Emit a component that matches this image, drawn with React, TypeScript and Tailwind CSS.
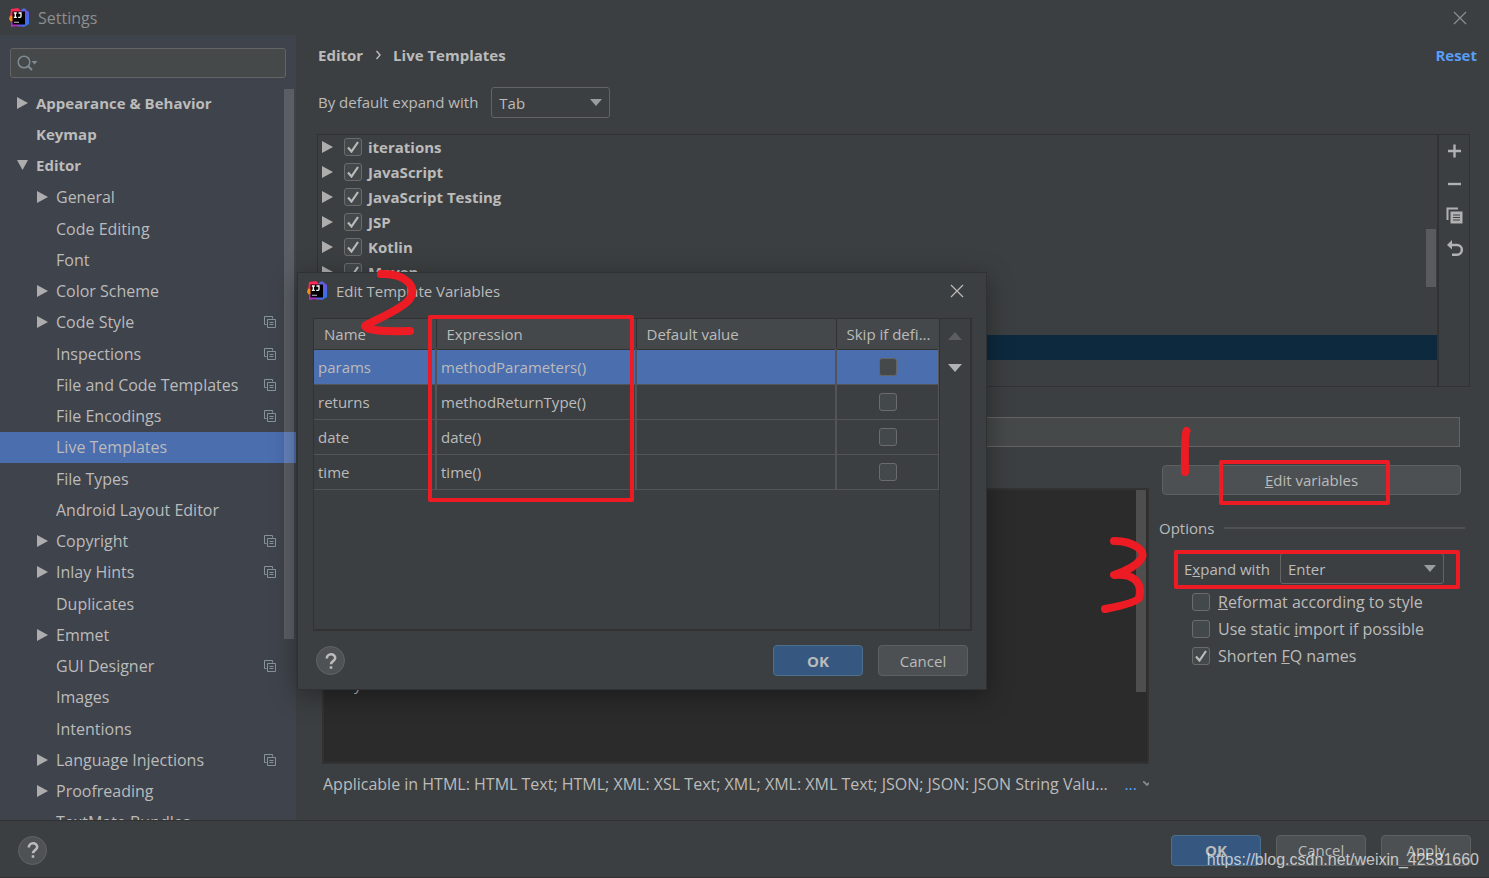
import { useId, type ReactNode } from "react";

type TreeItem = {
  label: string;
  level: 0 | 1;
  arrow?: "right" | "down";
  scoped?: boolean;
  selected?: boolean;
};

const tree: TreeItem[] = [
  { label: "Appearance & Behavior", level: 0, arrow: "right" },
  { label: "Keymap", level: 0 },
  { label: "Editor", level: 0, arrow: "down" },
  { label: "General", level: 1, arrow: "right" },
  { label: "Code Editing", level: 1 },
  { label: "Font", level: 1 },
  { label: "Color Scheme", level: 1, arrow: "right" },
  { label: "Code Style", level: 1, arrow: "right", scoped: true },
  { label: "Inspections", level: 1, scoped: true },
  { label: "File and Code Templates", level: 1, scoped: true },
  { label: "File Encodings", level: 1, scoped: true },
  { label: "Live Templates", level: 1, selected: true },
  { label: "File Types", level: 1 },
  { label: "Android Layout Editor", level: 1 },
  { label: "Copyright", level: 1, arrow: "right", scoped: true },
  { label: "Inlay Hints", level: 1, arrow: "right", scoped: true },
  { label: "Duplicates", level: 1 },
  { label: "Emmet", level: 1, arrow: "right" },
  { label: "GUI Designer", level: 1, scoped: true },
  { label: "Images", level: 1 },
  { label: "Intentions", level: 1 },
  { label: "Language Injections", level: 1, arrow: "right", scoped: true },
  { label: "Proofreading", level: 1, arrow: "right" },
  { label: "TextMate Bundles", level: 1 },
];

const groups = ["iterations", "JavaScript", "JavaScript Testing", "JSP", "Kotlin", "Maven"];

const variables = [
  { name: "params", expression: "methodParameters()" },
  { name: "returns", expression: "methodReturnType()" },
  { name: "date", expression: "date()" },
  { name: "time", expression: "time()" },
];

function AppLogo() {
  const id = useId();
  return (
    <svg viewBox="0 0 20 20" className="size-5 shrink-0" aria-hidden="true">
      <defs>
        <linearGradient id={id} x1="0" y1="0" x2="1" y2="1">
          <stop offset="0" stopColor="#3f78f0" />
          <stop offset="0.5" stopColor="#6a55dd" />
          <stop offset="1" stopColor="#1f7df5" />
        </linearGradient>
      </defs>
      <path d="M2 1 9 0l5 5-5 6H1z" fill="#fe2857" />
      <path d="M0 11 1 7.500l5 1.500v6l-4-1z" fill="#fc8a1d" />
      <path d="M2 13h6l3 6-4-1-5 1z" fill="#b52fc4" />
      <path d="m12 2 3-2 5 4v12l-5 3-6-1 1-9z" fill={`url(#${id})`} />
      <path d="M3.500 3.500h12.500v13H3.500z" fill="#000" />
      <path d="M4.800 5h3M6.300 5v4M4.800 9.300h3M9.500 5h2.500v3.300q0 1-1 1H9.200" stroke="#fff" strokeWidth="1.300" fill="none" />
      <path d="M5 14.300h5" stroke="#aaa" strokeWidth="1.200" />
    </svg>
  );
}

function Arrow({ dir }: { dir: "right" | "down" }) {
  return (
    <svg viewBox="0 0 12 12" className="size-3 shrink-0" aria-hidden="true">
      <path d={dir === "right" ? "M1 0l11 6-11 6z" : "M1 1h11L6.500 11z"} fill="#adadad" />
    </svg>
  );
}

function ScopeIcon() {
  return (
    <svg viewBox="0 0 12 12" className="size-3 shrink-0" fill="none" stroke="#87939a" aria-hidden="true">
      <path d="M2.500 8.500h-2v-8h8v2M3.500 3.500h8v8h-8zM5.500 6.500h4M5.500 8.500h4" />
    </svg>
  );
}

function CloseIcon() {
  return (
    <svg viewBox="0 0 14 14" className="size-[14px]" fill="none" stroke="currentColor" strokeWidth="1.200" aria-hidden="true">
      <path d="M1 1l12 12M13 1L1 13" />
    </svg>
  );
}

function Check({ label, checked = false, disabled = false }: { label: string; checked?: boolean; disabled?: boolean }) {
  return (
    <span className="relative grid size-[18px] shrink-0 place-items-center">
      <input
        type="checkbox"
        id={label}
        aria-label={label}
        defaultChecked={checked}
        className={`peer col-start-1 row-start-1 size-[18px] appearance-none rounded-[3px] border ${
          disabled ? "border-[#646464] bg-[#45494a]" : "border-[#6b6b6b] bg-[#43494a]"
        }`}
      />
      <svg
        viewBox="0 0 12 12"
        className="pointer-events-none invisible col-start-1 row-start-1 size-3 peer-checked:visible"
        fill="none"
        stroke="#bbbbbb"
        strokeWidth="2.200"
        aria-hidden="true"
      >
        <path d="M1 6.500l3.500 4L11 1" />
      </svg>
    </span>
  );
}

function Dropdown({ id, value, className }: { id: string; value: string; className: string }) {
  return (
    <span className={`relative block ${className}`}>
      <select
        id={id}
        defaultValue={value}
        className="h-[31px] w-full appearance-none rounded-[3px] border border-[#646464] bg-[#3c3f41] pl-[7px] text-[#bbbbbb]"
      >
        <option>{value}</option>
      </select>
      <svg viewBox="0 0 12 7" className="pointer-events-none absolute top-3 right-2 h-[7px] w-3" aria-hidden="true">
        <path d="M0 0h12L6 7z" fill="#9a9da0" />
      </svg>
    </span>
  );
}

function Button({ children, primary = false }: { children: ReactNode; primary?: boolean }) {
  return (
    <button
      className={`h-[31px] w-[90px] rounded-[4px] border ${
        primary ? "border-[#4c708c] bg-[#365880] font-bold" : "border-[#5e6060] bg-[#4c5052]"
      }`}
    >
      {children}
    </button>
  );
}

function HelpButton() {
  return (
    <button
      aria-label="Help"
      className="grid size-[29px] place-items-center rounded-full border border-[#616467] bg-[#4e5254]"
    >
      <svg viewBox="0 0 12 16" className="h-4 w-3" fill="none" stroke="#bbbbbb" strokeWidth="2.600" aria-hidden="true">
        <path d="M1.800 5.500C1.800 0 10.200 0 10.200 5c0 3-4.200 3.200-4.200 6.200M6 13.200v2.600" />
      </svg>
    </button>
  );
}

function Sidebar() {
  return (
    <aside className="relative flex w-[296px] shrink-0 flex-col overflow-hidden bg-[#3f434b]">
      <div className="shrink-0 px-[10px] pt-[13px] pb-[10px]">
        <div className="relative flex items-center">
          <input
            type="text"
            aria-label="Search settings"
            className="h-[30px] w-full rounded-[3px] border border-[#646464] bg-[#45494a] pl-8"
          />
          <svg viewBox="0 0 22 16" className="pointer-events-none absolute left-[7px] h-4 w-[22px]" fill="none" stroke="#7f8b91" strokeWidth="1.500" aria-hidden="true">
            <circle cx="7" cy="7" r="5.800" />
            <path d="M11 11l4 4" strokeWidth="2" />
            <path d="M14.500 6h6L17.500 9.500z" fill="#7f8b91" stroke="none" />
          </svg>
        </div>
      </div>
      <ul className="grid h-[750px] shrink-0 auto-rows-fr">
        {tree.map((item) => (
          <li
            key={item.label}
            className={`flex items-center gap-2 pr-5 whitespace-nowrap ${
              item.level ? "pl-9 text-base" : "pb-[2px] pl-4 font-bold"
            } ${item.selected ? "bg-[#4b6eaf]" : ""}`}
          >
            {item.arrow ? <Arrow dir={item.arrow} /> : <span className="size-3 shrink-0" />}
            <span className="flex-1 leading-5">{item.label}</span>
            {item.scoped && <ScopeIcon />}
          </li>
        ))}
      </ul>
      <div className="absolute top-[54px] right-[2px] h-[550px] w-[10px] bg-white/15" />
    </aside>
  );
}

function TemplateGroups() {
  return (
    <section className="mr-[19px] flex h-[253px] shrink-0 border border-[#323232]">
      <div className="relative flex-1 overflow-hidden">
        <ul>
          {groups.map((name) => (
            <li key={name} className="flex h-[25px] items-center pb-[2px] pl-[3px] font-bold">
              <Arrow dir="right" />
              <span className="ml-[11px]">
                <Check label={name} checked />
              </span>
              <label htmlFor={name} className="ml-[6px]">
                {name}
              </label>
            </li>
          ))}
          <li className="h-[50px]" />
          <li className="h-[25px] bg-[#0d293e]" />
        </ul>
        <div className="absolute top-[94px] right-px h-[58px] w-[10px] bg-[#595b5d]" />
      </div>
      <div className="flex w-8 flex-col items-center gap-[15px] border-l-2 border-[#323232] pt-2 text-[#afb1b3]">
        <button aria-label="Add" className="size-[17px]">
          <svg viewBox="0 0 17 17" fill="none" stroke="currentColor" strokeWidth="2.400"><path d="M2 8h13M8.500 1.500v13" /></svg>
        </button>
        <button aria-label="Remove" className="size-[17px]">
          <svg viewBox="0 0 17 17" fill="none" stroke="currentColor" strokeWidth="2.400"><path d="M2 9h13" /></svg>
        </button>
        <button aria-label="Duplicate" className="size-[17px]">
          <svg viewBox="0 0 17 17" fill="none" stroke="currentColor" strokeWidth="2"><path d="M1.500 13V1.500H12" /><path d="M4.500 4.500h12v12h-12z" fill="currentColor" stroke="none" /><path d="M7 8h7M7 10.500h7M7 13h7" stroke="#3c3f41" strokeWidth="1" /></svg>
        </button>
        <button aria-label="Restore" className="size-[17px]">
          <svg viewBox="0 0 17 17" fill="none" stroke="currentColor" strokeWidth="2.400"><path d="M4 6h7a4.800 4.800 0 0 1 0 9.700H6" /><path d="M1 6L6 1v9.500z" fill="currentColor" stroke="none" /></svg>
        </button>
      </div>
    </section>
  );
}

function Options() {
  return (
    <section className="relative ml-[10px] w-[306px] shrink-0">
      <div className="pt-[18px] pr-1 pl-[3px]">
        <button className="h-[30px] w-full rounded-[4px] border border-[#5e6060] bg-[#4c5052]">
          <u>E</u>dit variables
        </button>
      </div>
      <div className="mt-[21px] flex items-center gap-[10px]">
        <h2 className="leading-6">Options</h2>
        <hr className="flex-1 border-t-2 border-[#515151]" />
      </div>
      <div className="mt-[13px] flex items-center gap-[10px] pl-[25px]">
        <label htmlFor="expand" className="whitespace-nowrap">
          E<u>x</u>pand with
        </label>
        <Dropdown id="expand" value="Enter" className="w-[164px]" />
      </div>
      <div className="mt-[6px] flex flex-col gap-[3px] pl-[33px] text-base">
        <label htmlFor="reformat" className="flex h-6 items-center gap-2 whitespace-nowrap">
          <Check label="reformat" />
          <span><u>R</u>eformat according to style</span>
        </label>
        <label htmlFor="static" className="flex h-6 items-center gap-2 whitespace-nowrap">
          <Check label="static" />
          <span>Use static <u>i</u>mport if possible</span>
        </label>
        <label htmlFor="shorten" className="flex h-6 items-center gap-2 whitespace-nowrap">
          <Check label="shorten" checked />
          <span>Shorten <u>F</u>Q names</span>
        </label>
      </div>
      <svg
        viewBox="0 0 370 200"
        className="pointer-events-none absolute top-[-27px] left-[-69px] h-[200px] w-[370px]"
        fill="none"
        stroke="#ed1c24"
        aria-hidden="true"
      >
        <path d="M96.500 11q-2 3-1.500 41" strokeWidth="8" strokeLinecap="round" />
        <path d="M131 42h167v41H131z" strokeWidth="4" strokeLinejoin="round" />
        <path d="M86 132h282v35H86z" strokeWidth="4" strokeLinejoin="round" />
        <path d="M24 121C45 121 57 132 51 139Q45 148 24 155C44 153 53 163 49 178Q46 183 15 189" strokeWidth="8" strokeLinecap="round" strokeLinejoin="round" />
      </svg>
    </section>
  );
}

function VariablesDialog() {
  return (
    <div
      role="dialog"
      aria-label="Edit Template Variables"
      className="absolute top-[272px] left-[297px] flex h-[418px] w-[690px] flex-col border border-[#2f3133] bg-[#3c3f41] pr-[14px] pl-[15px] shadow-[0_6px_24px_rgba(0,0,0,0.35)]"
    >
      <header className="flex h-[45px] shrink-0 items-center pb-[9px]">
        <span className="-ml-[6px] flex flex-1 items-center gap-[9px]">
          <AppLogo />
          <h2>Edit Template Variables</h2>
        </span>
        <button aria-label="Close dialog" className="mr-2">
          <CloseIcon />
        </button>
      </header>
      <div className="flex h-[313px] shrink-0 border border-r-2 border-b-2 border-[#323232]">
        <div className="flex-1">
          <table className="w-full table-fixed border-collapse text-left">
            <colgroup>
              <col className="w-[122px]" />
              <col className="w-[200px]" />
              <col className="w-[200px]" />
              <col />
            </colgroup>
            <thead>
              <tr className="h-[30px] border-b border-[#323232] bg-[#45484a]">
                {["Name", "Expression", "Default value", "Skip if defi..."].map((head, i) => (
                  <th
                    key={head}
                    className={`pt-px pl-[10px] font-normal whitespace-nowrap ${i < 3 ? "border-r border-[#323232]" : ""}`}
                  >
                    {head}
                  </th>
                ))}
              </tr>
            </thead>
            <tbody>
              {variables.map((v, i) => (
                <tr key={v.name} className={`h-[35px] border-b border-[#525456] ${i === 0 ? "bg-[#4b6eaf]" : ""}`}>
                  <td className="border-r-2 border-[#525456] pl-1">{v.name}</td>
                  <td className="border-r-2 border-[#525456] pl-1">{v.expression}</td>
                  <td className="border-r-2 border-[#525456]" />
                  <td className="border-r border-[#525456]">
                    <span className="flex justify-center">
                      <Check label={`Skip ${v.name}`} disabled={i === 0} />
                    </span>
                  </td>
                </tr>
              ))}
            </tbody>
          </table>
        </div>
        <div className="flex w-[31px] flex-col items-center gap-6 border-l border-[#323232] pt-[13px]">
          <button aria-label="Move up">
            <svg viewBox="0 0 14 8" className="h-2 w-[14px]"><path d="M0 8h14L7 0z" fill="#5b5d5f" /></svg>
          </button>
          <button aria-label="Move down">
            <svg viewBox="0 0 14 8" className="h-2 w-[14px]"><path d="M0 0h14L7 8z" fill="#afb1b3" /></svg>
          </button>
        </div>
      </div>
      <footer className="flex items-center gap-[15px] pt-[14px] pr-1 pl-[3px]">
        <span className="flex-1">
          <HelpButton />
        </span>
        <Button primary>OK</Button>
        <Button>Cancel</Button>
      </footer>
      <svg
        viewBox="0 0 280 236"
        className="pointer-events-none absolute top-[-5px] left-[60px] h-[236px] w-[280px]"
        fill="none"
        stroke="#ed1c24"
        aria-hidden="true"
      >
        <path d="M23 6C48 5 62 20 50 33C39 44 12 54 7 58Q8 64 52 63" strokeWidth="8" strokeLinecap="round" strokeLinejoin="round" />
        <path d="M72 49h202v183H72z" strokeWidth="4" strokeLinejoin="round" />
      </svg>
    </div>
  );
}

export default function App() {
  return (
    <div className="relative flex h-screen flex-col overflow-hidden bg-[#3c3f41] font-['Open_Sans','Noto_Sans',sans-serif] text-[15px] leading-5 text-[#bbbbbb]">
      <header className="flex h-[35px] shrink-0 items-center gap-[9px] pr-[22px] pl-[9px] text-[#8c8e8f]">
        <AppLogo />
        <h1 className="flex-1 text-base">Settings</h1>
        <button aria-label="Close settings">
          <CloseIcon />
        </button>
      </header>

      <div className="flex min-h-0 flex-1">
        <Sidebar />
        <main className="flex min-w-0 flex-1 flex-col pl-[21px]">
          <div className="mt-[10px] flex items-center pr-3 pl-px font-bold">
            <span>Editor</span>
            <svg viewBox="0 0 6 10" className="mx-3 h-[10px] w-[6px]" fill="none" stroke="#bbbbbb" strokeWidth="1.400" aria-hidden="true">
              <path d="M1.500 1L5 5 1.500 9" />
            </svg>
            <span className="flex-1">Live Templates</span>
            <a href="#reset" className="text-[#589df6]">Reset</a>
          </div>
          <div className="mt-[22px] mb-4 flex items-center gap-[13px] pl-px">
            <label htmlFor="default-expand" className="pb-[2px]">By default expand with</label>
            <Dropdown id="default-expand" value="Tab" className="w-[119px]" />
          </div>
          <TemplateGroups />
          <input
            type="text"
            aria-label="Description"
            className="mt-[30px] mr-[29px] ml-[5px] h-[30px] shrink-0 border border-[#646464] bg-[#45494a]"
          />
          <div className="mr-6 ml-[5px] flex">
            <div className="min-w-0 flex-1">
              <div className="relative mt-[41px] flex h-[276px] items-end border-2 border-[#323232] bg-[#2b2b2b] px-[10px] pb-[68px] text-[#a9b7c6]">
                way
                <div className="absolute top-0 right-px h-[202px] w-[10px] bg-[#4e4e4e]" />
              </div>
              <div className="mt-[10px] flex items-center pl-px text-base leading-5">
                <span className="truncate">
                  Applicable in HTML: HTML Text; HTML; XML: XSL Text; XML; XML: XML Text; JSON; JSON: JSON String Valu...
                </span>
                <a href="#contexts" className="ml-auto text-[#589df6]">...</a>
                <svg viewBox="0 0 6 6" className="ml-[6px] size-[6px] shrink-0" fill="none" stroke="#87898b" strokeWidth="1.800" aria-hidden="true">
                  <path d="M0 0l4 4 2-2" />
                </svg>
              </div>
            </div>
            <Options />
          </div>
        </main>
      </div>

      <footer className="relative flex h-[58px] shrink-0 items-center gap-[15px] border-t border-b border-[#323232] px-[18px] pt-[2px]">
        <span className="flex-1">
          <HelpButton />
        </span>
        <Button primary>OK</Button>
        <Button>Cancel</Button>
        <Button>Apply</Button>
        <span className="absolute right-[10px] bottom-[7px] font-['Liberation_Sans',Arial,sans-serif] text-base leading-5 text-white/70">
          https://blog.csdn.net/weixin_42581660
        </span>
      </footer>

      <VariablesDialog />
    </div>
  );
}
